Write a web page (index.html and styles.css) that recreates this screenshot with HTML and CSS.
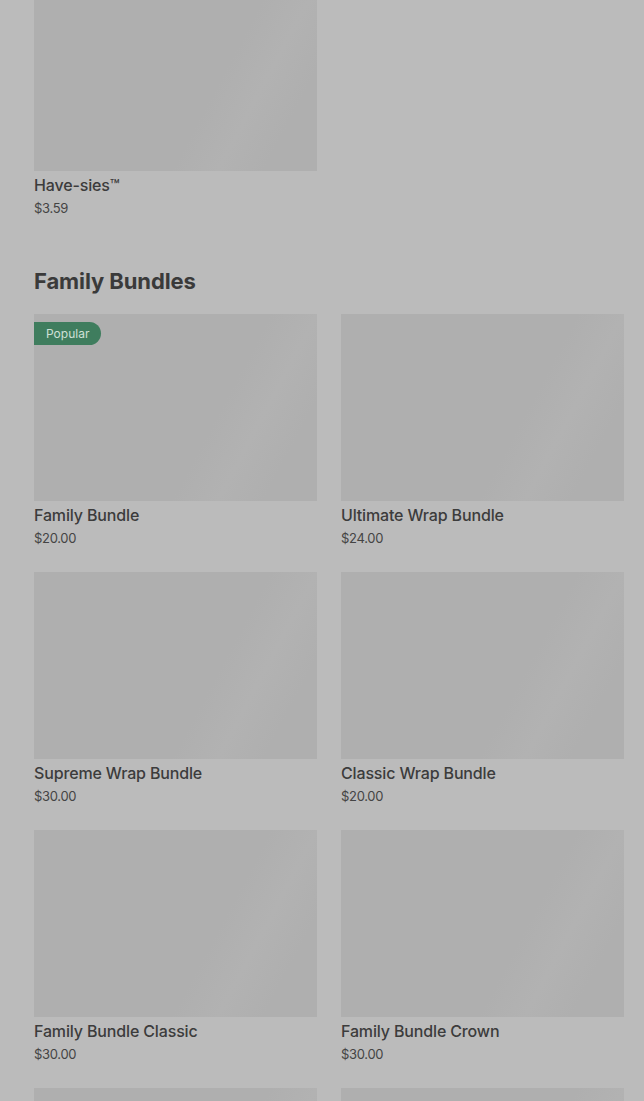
FILE: index.html
```html
<!DOCTYPE html>
<html lang="en">
  <head>
    <meta charset="UTF-8" />
    <meta name="viewport" content="width=device-width, initial-scale=1.0" />
    <title>Menu</title>
    <link rel="stylesheet" href="styles.css">
  </head>
  <body>
    <div class="menu">
      <section class="section first">
        <div class="grid">
          <div class="item">
            <div class="thumb"></div>
            <div class="name">Have-sies™</div>
            <div class="price">$3.59</div>
          </div>
        </div>
      </section>

      <section class="section">
        <h2 class="heading">Family Bundles</h2>
        <div class="grid">
          <div class="item">
            <div class="thumb">
              <span class="badge">Popular</span>
            </div>
            <div class="name">Family Bundle</div>
            <div class="price">$20.00</div>
          </div>
          <div class="item">
            <div class="thumb"></div>
            <div class="name">Ultimate Wrap Bundle</div>
            <div class="price">$24.00</div>
          </div>
          <div class="item">
            <div class="thumb"></div>
            <div class="name">Supreme Wrap Bundle</div>
            <div class="price">$30.00</div>
          </div>
          <div class="item">
            <div class="thumb"></div>
            <div class="name">Classic Wrap Bundle</div>
            <div class="price">$20.00</div>
          </div>
          <div class="item">
            <div class="thumb"></div>
            <div class="name">Family Bundle Classic</div>
            <div class="price">$30.00</div>
          </div>
          <div class="item">
            <div class="thumb"></div>
            <div class="name">Family Bundle Crown</div>
            <div class="price">$30.00</div>
          </div>
          <div class="item">
            <div class="thumb"></div>
          </div>
          <div class="item">
            <div class="thumb"></div>
          </div>
        </div>
      </section>
    </div>
  </body>
</html>
```

FILE: styles.css
```css
body {
  margin: 0;
  padding: 0;
  background-color: #bbbbbb;
  font-family: Inter, "Noto Sans", sans-serif;
  color: #3b3b3b;
  overflow: hidden;
}

.menu {
  padding: 0 20px 0 34px;
  margin-top: -16px;
}

.section.first {
  margin-bottom: 50px;
}

.heading {
  margin: 0 0 19px;
  font-size: 22px;
  line-height: 28px;
  font-weight: 700;
  letter-spacing: -0.1px;
  color: #3a3a3a;
}

.grid {
  display: grid;
  grid-template-columns: 283px 283px;
  column-gap: 24px;
  row-gap: 25px;
}

.thumb {
  position: relative;
  height: 187px;
  background: linear-gradient(118deg, #afafaf 62%, #b2b2b2 74%, #afafaf 86%);
}

.badge {
  position: absolute;
  top: 8px;
  left: 0;
  height: 23px;
  padding: 0 12px;
  line-height: 23px;
  font-size: 12px;
  color: #cfe0d6;
  background-color: #3f7d5e;
  border-radius: 0 12px 12px 0;
}

.name {
  margin-top: 4px;
  font-size: 16px;
  line-height: 20px;
  font-weight: 500;
  letter-spacing: -0.15px;
  color: #3c3c3c;
}

.price {
  margin-top: 4px;
  font-size: 13px;
  line-height: 18px;
  letter-spacing: -0.3px;
  color: #444444;
}
```
